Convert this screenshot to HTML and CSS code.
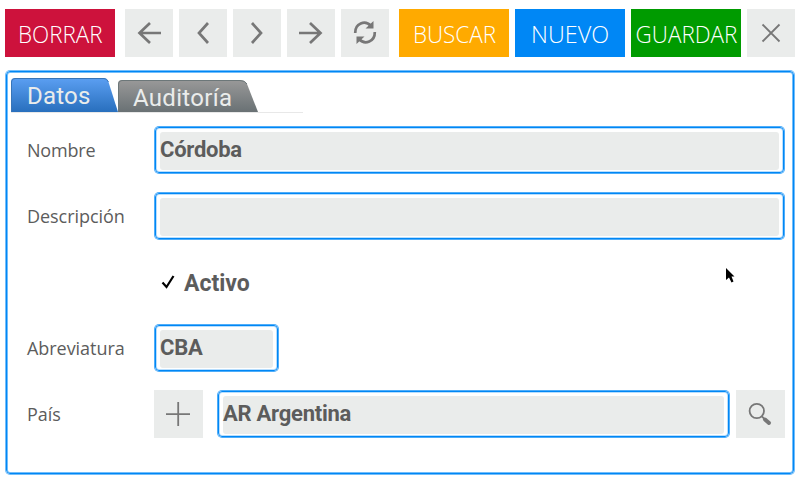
FILE: index.html
```
<!DOCTYPE html>
<html lang="es">
<head>
<meta charset="utf-8">
<title>Datos</title>
<link rel="stylesheet" href="styles.css">
</head>
<body>
<header class="toolbar">
  <button class="btn red"><span>BORRAR</span></button>
  <div class="nav">
    <button class="icon"><svg viewBox="0 0 48 48"><path d="M36 24H14M25 14L14.500 24L25 34"/></svg></button>
    <button class="icon"><svg viewBox="0 0 48 48"><path d="M29 14L20 24L29 34"/></svg></button>
    <button class="icon"><svg viewBox="0 0 48 48"><path d="M19 14L28 24L19 34"/></svg></button>
    <button class="icon"><svg viewBox="0 0 48 48"><path d="M12 24H34M23 14L33.500 24L23 34"/></svg></button>
    <button class="icon"><svg viewBox="0 0 48 48"><path d="M14.200 24C14 14.500 24 10.500 30 17M33.800 23C34 32.500 24 36.500 18 30"/><path class="solid" d="M32.500 12V19.500H24.500ZM15.500 35V27.500H23.500Z"/></svg></button>
  </div>
  <button class="btn orange"><span>BUSCAR</span></button>
  <button class="btn blue"><span class="nuevo">NUEVO</span></button>
  <button class="btn green"><span>GUARDAR</span></button>
  <button class="icon"><svg viewBox="0 0 48 48"><path class="thin" d="M15.500 15.500L32.500 32.500M32.500 15.500L15.500 32.500"/></svg></button>
</header>
<main class="panel">
  <nav class="tabs">
    <div class="tab datos">
      <svg viewBox="0 0 108 34"><defs><linearGradient id="b" x2="0" y2="1"><stop stop-color="#5b9ff2"/><stop offset="1" stop-color="#286fbd"/></linearGradient></defs><path fill="url(#b)" d="M0 34V4Q0 0 4 0H93Q96 0 97.500 4L107 34Z"/><path class="edge-blue" d="M.5 34V4Q.5 .5 4 .5H93Q96 .5 97.500 4"/></svg>
      <span>Datos</span>
    </div>
    <div class="tab audit">
      <svg viewBox="0 0 141 32"><defs><linearGradient id="g" x2="0" y2="1"><stop stop-color="#999"/><stop offset="1" stop-color="#697174"/></linearGradient></defs><path fill="url(#g)" d="M0 32V4Q0 0 4 0H122Q127 0 129 4L140 32Z"/><path class="edge-gray" d="M.5 32V4Q.5 .5 4 .5H122Q127 .5 129 4"/></svg>
      <span>Auditoría</span>
    </div>
  </nav>
  <form class="form">
    <label class="wide">Nombre</label><div class="field"><span class="tight">Córdoba</span></div>
    <label>Descripción</label><div class="field"></div>
    <span></span><div class="check"><svg viewBox="0 0 16 16"><path d="M2.500 8.500L6.500 13L13.500 2"/></svg><span>Activo</span></div>
    <label>Abreviatura</label><div class="field short"><span class="tight">CBA</span></div>
    <label>País</label>
    <div class="lookup">
      <button type="button" class="icon"><svg viewBox="0 0 48 48"><path class="thin" d="M12 24.200H36M24.200 12V36"/></svg></button>
      <div class="field"><span class="tight">AR Argentina</span></div>
      <button type="button" class="icon"><svg viewBox="0 0 48 48"><circle class="thin" cx="20.800" cy="21" r="7.200"/><path class="thin" d="M25.800 26.300L29 29.500"/><path class="handle" d="M29 29.500L33 33"/></svg></button>
    </div>
  </form>
</main>
<svg class="cursor" viewBox="0 0 9 15"><path d="M0 0V12L3 9.500L5.500 14.500L7.500 13.500L5.500 8.500H8.500Z"/></svg>
</body>
</html>
```
FILE: styles.css
```
* { box-sizing: border-box; }
body { margin: 0; width: 800px; height: 480px; overflow: hidden; background: #fff; color: #5c5c5c; font-family: "Open Sans", sans-serif; }
button { border: 0; padding: 0; margin: 0; flex: none; font-family: inherit; }
.toolbar { display: flex; gap: 6px; padding: 9px 5px 0; height: 70px; }
.nav { display: flex; gap: 6px; margin: 0 4px; }
.btn { width: 110px; height: 48px; color: #fff; font-size: 24px; font-weight: 300; line-height: 48px; white-space: nowrap; display: flex; justify-content: center; }
.btn span { display: block; flex: none; padding-top: 1px; transform: scaleX(.935); }
.btn .nuevo { transform: scaleX(.975); }
.red { background: #cd123c; }
.orange { background: #ffaa00; }
.blue { background: #0087f5; }
.green { background: #009b00; }
.icon { width: 48px; height: 48px; background: #eaeceb; }
.icon svg { display: block; width: 48px; height: 48px; fill: none; stroke: #777; stroke-width: 2.7; }
.icon .thin { stroke-width: 1.8; }
.icon .solid { fill: #777; stroke: none; }
.icon .handle { stroke-width: 4; stroke-linecap: round; }
.panel { width: 788px; height: 403px; margin-left: 6px; margin-top: 1px; border: 1px solid #0087f5; border-radius: 4px; box-shadow: 0 0 0 1px #72bdfa, inset 0 0 0 1px #72bdfa; padding: 6px 0 0 4px; }
.tabs { display: flex; align-items: flex-end; width: 292px; height: 35px; border-bottom: 1px solid #e8e8e8; font-family: Roboto, sans-serif; font-size: 24px; color: #eaeceb; }
.tab { display: grid; flex: none; }
.tab > * { grid-area: 1 / 1; }
.tab svg { display: block; }
.datos, .datos svg { width: 108px; height: 34px; }
.audit, .audit svg { width: 141px; height: 32px; }
.audit { margin-left: -1px; }
.datos span { padding-left: 16px; line-height: 36px; letter-spacing: .2px; }
.audit span { padding-left: 15px; line-height: 36px; letter-spacing: .3px; }
.edge-blue { fill: none; stroke: #3875b8; }
.edge-gray { fill: none; stroke: #6c7779; }
.form { display: grid; grid-template-columns: 127px 631px; grid-auto-rows: 48px; row-gap: 18px; margin: 13px 0 0 16px; align-items: center; }
label { font-size: 18px; letter-spacing: -.05px; white-space: nowrap; justify-self: start; }
.wide { letter-spacing: -.2px; }
.field { height: 46px; margin: 0 1px; border: 1px solid #0087f5; border-radius: 4px; box-shadow: 0 0 0 1px #4fadf9, inset 0 0 0 1px #b8defd; padding: 4px; font: bold 22px/35px Roboto, sans-serif; white-space: nowrap; }
.field::before { content: ""; display: block; height: 38px; margin-bottom: -38px; background: #eaeceb; border-radius: 3px; }
.field span { position: relative; }
.tight { letter-spacing: -.25px; }
.short { width: 123px; }
.check { display: flex; align-items: center; padding-left: 6px; padding-top: 3px; font: bold 23px/48px Roboto, sans-serif; }
.check svg { width: 16px; height: 16px; margin: -4px 8px 0 0; fill: none; stroke: #000; stroke-width: 2.2; }
.lookup { display: flex; }
.lookup .icon { width: 49px; }
.lookup .field { width: 511px; margin: 1px 7px 0 15px; }
.cursor { position: absolute; left: 726px; top: 268px; width: 9px; height: 15px; }
```
